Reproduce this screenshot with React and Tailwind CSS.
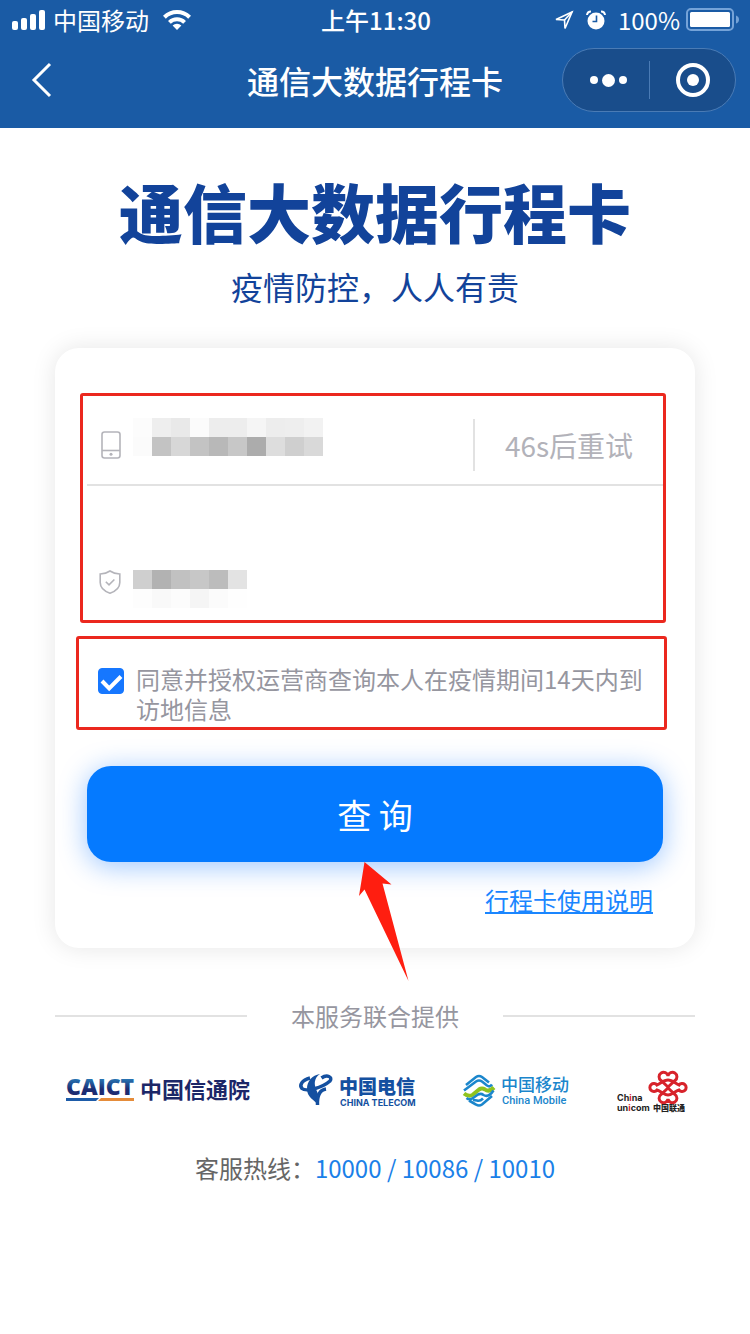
import React from "react";

const phoneMosaic = [
  ["#fcfcfc", "#eeeeee", "#e9e9e9", "#fbfbfb", "#ededed", "#ededed", "#f5f5f5", "#ededed", "#eeeeee", "#f2f2f2"],
  ["#fbfbfb", "#c3c3c3", "#d7d7d7", "#c3c3c3", "#b8b8b8", "#c7c7c7", "#acacac", "#dddddd", "#cfcfcf", "#d9d9d9"],
];

const codeMosaic = [
  ["#cfcfcf", "#b2b2b2", "#c1c1c1", "#c7c7c7", "#bcbcbc", "#e3e3e3"],
  ["#fdfdfd", "#f9f9f9", "#fcfcfc", "#f5f5f5", "#fbfbfb", "#fefefe"],
];

const Mosaic = ({ rows }) => (
  <div aria-hidden="true">
    {rows.map((row, i) => (
      <div key={i} className="flex">
        {row.map((color, j) => (
          <span key={j} className="h-[19px] w-[19px]" style={{ backgroundColor: color }} />
        ))}
      </div>
    ))}
  </div>
);

const StatusBar = () => (
  <div className="grid h-10 grid-cols-3 items-center pr-[10px] pl-3 text-2xl leading-10">
    <div className="flex items-center">
      <svg className="mr-2 h-5 w-[33px]" viewBox="0 0 33 20" fill="currentColor">
        <rect x="0" y="11" width="6" height="9" rx="2" />
        <rect x="9" y="8" width="6" height="12" rx="2" />
        <rect x="18" y="4" width="6" height="16" rx="2" />
        <rect x="27" y="0" width="6" height="20" rx="2" />
      </svg>
      <span>中国移动</span>
      <svg className="ml-[14px] h-5 w-7" viewBox="0 0 28 20" fill="none" stroke="currentColor" strokeWidth="4">
        <path d="M1.4 7.2a18 18 0 0 1 25.2 0" />
        <path d="M6.4 12.4a11 11 0 0 1 15.2 0" />
        <path d="M14 20l-4.4-4.6a6.5 6.5 0 0 1 8.8 0z" fill="currentColor" stroke="none" />
      </svg>
    </div>
    <div className="text-center font-medium">上午11:30</div>
    <div className="flex items-center justify-end">
      <svg className="mr-3 h-5 w-5" viewBox="0 0 20 20" fill="none" stroke="currentColor" strokeWidth="1.6">
        <path d="M18 2L2 9.500l8.500.5.500 8.500z" />
        <path d="M18 2l-7.500 8" />
      </svg>
      <svg className="mr-3 h-5 w-5" viewBox="0 0 20 20">
        <circle cx="10" cy="11" r="8.500" fill="#fff" />
        <path d="M1 5A4 4 0 0 1 5 1.500M19 5a4 4 0 0 0-4-3.500" stroke="#fff" strokeWidth="2" fill="none" />
        <path d="M10.500 5.500v6H6.500" stroke="#1a5ba5" strokeWidth="1.600" fill="none" />
      </svg>
      <span>100%</span>
      <svg className="ml-[6px] h-6 w-[54px]" viewBox="0 0 54 24">
        <rect x="1" y="1" width="46" height="21" rx="4" fill="none" stroke="#75a3d8" strokeWidth="2" />
        <rect x="4" y="4" width="40" height="15" rx="1.500" fill="#fff" />
        <path d="M50 7.500q3 1 3 4t-3 4z" fill="#75a3d8" />
      </svg>
    </div>
  </div>
);

const NavBar = () => (
  <div className="grid h-[88px] grid-cols-[1fr_auto_1fr] items-center px-[14px] pb-2">
    <button type="button" aria-label="返回" className="ml-4 w-6">
      <svg className="h-9 w-6" viewBox="0 0 24 36" fill="none" stroke="currentColor" strokeWidth="3">
        <path d="M20 2L4 18l16 16" />
      </svg>
    </button>
    <h1 className="text-[32px] leading-10 font-medium">通信大数据行程卡</h1>
    <div className="flex h-16 w-[174px] items-center justify-self-end rounded-full border border-[#4a7bb5] bg-[#194d8b]">
      <button type="button" aria-label="更多" className="flex w-[86px] items-center justify-center gap-1 pl-1">
        <span className="h-2 w-2 rounded-full bg-white" />
        <span className="h-[13px] w-[13px] rounded-full bg-white" />
        <span className="h-2 w-2 rounded-full bg-white" />
      </button>
      <span className="h-[38px] w-px bg-[#4a7bb5]" />
      <button type="button" aria-label="关闭" className="flex flex-1 items-center justify-center">
        <svg className="h-[34px] w-[34px]" viewBox="0 0 34 34">
          <circle cx="17" cy="17" r="15" fill="none" stroke="#fff" strokeWidth="4" />
          <circle cx="17" cy="17" r="6" fill="#fff" />
        </svg>
      </button>
    </div>
  </div>
);

const QueryForm = () => (
  <form
    className="mx-[55px] mt-10 rounded-3xl bg-white px-8 pt-[58px] pb-8 shadow-[0_0_24px_rgba(0,0,0,0.1)]"
    onSubmit={(e) => e.preventDefault()}
  >
    <div className="relative">
      <div className="flex h-20 items-center border-b-2 border-[#e2e2e2] pl-[14px]">
        <svg className="h-7 w-5 shrink-0" viewBox="0 0 20 28" fill="none" stroke="#b4b4ba" strokeWidth="1.600">
          <rect x="1" y="1" width="18" height="26" rx="2.500" />
          <path d="M1 19.500h18" />
          <circle cx="10" cy="23.300" r="1.500" fill="#b4b4ba" stroke="none" />
        </svg>
        <div className="relative h-full flex-1">
          <input type="tel" aria-label="手机号" className="h-full w-full pl-3 text-[28px] outline-none" />
          <div className="pointer-events-none absolute top-3 left-3">
            <Mosaic rows={phoneMosaic} />
          </div>
        </div>
        <button
          type="button"
          className="h-[52px] w-[190px] border-l-2 border-[#e2e2e2] text-[28px] text-[#b2b2b9]"
        >
          46s后重试
        </button>
      </div>
      <div className="mt-14 flex h-20 items-center pl-3">
        <svg className="h-6 w-[22px] shrink-0" viewBox="0 0 22 24" fill="none" stroke="#b4b4ba" strokeWidth="1.600">
          <path d="M11 1c2.500 1.800 6 2.800 9.800 3v8.500c0 5-4.300 8.800-9.800 10.700C5.500 21.300 1.200 17.500 1.200 12.500V4C5 3.800 8.500 2.800 11 1z" />
          <path d="M6.800 11.800l3.200 3.100 5.400-5.400" />
        </svg>
        <div className="relative h-full flex-1">
          <input type="text" aria-label="验证码" className="h-full w-full pl-3 text-[28px] outline-none" />
          <div className="pointer-events-none absolute top-7 left-3">
            <Mosaic rows={codeMosaic} />
          </div>
        </div>
      </div>
      <div className="pointer-events-none absolute -top-[13px] -right-[3px] -bottom-px -left-[7px] rounded-[3px] border-3 border-[#eb281e]" />
    </div>

    <div className="relative mt-[42px]">
      <div className="flex items-start gap-3 pl-[11px]">
        <div className="relative mt-1 h-[26px] w-[26px] shrink-0">
          <input
            id="agree"
            type="checkbox"
            defaultChecked
            className="block h-[26px] w-[26px] appearance-none rounded border border-[#1677ff] checked:bg-[#1677ff]"
          />
          <svg
            className="pointer-events-none absolute inset-0 h-[26px] w-[26px]"
            viewBox="0 0 26 26"
            fill="none"
            stroke="#fff"
            strokeWidth="4"
          >
            <path d="M4 13l7.200 7.500L23 8.500" />
          </svg>
        </div>
        <label htmlFor="agree" className="flex-1 text-2xl leading-[30px] text-[#96969f]">
          同意并授权运营商查询本人在疫情期间14天内到访地信息
        </label>
      </div>
      <div className="pointer-events-none absolute -top-7 -right-1 -bottom-[6px] -left-[11px] rounded-[3px] border-3 border-[#eb281e]" />
    </div>

    <div className="relative mt-[42px]">
      <button
        type="submit"
        className="h-24 w-full rounded-3xl bg-[#057aff] text-[34px] text-white shadow-[0_4px_28px_rgba(5,110,255,0.4)]"
      >
        查 询
      </button>
      <svg className="pointer-events-none absolute top-full left-1/2 -ml-4 h-[120px] w-[50px]" viewBox="0 0 50 120">
        <path d="M5.500 0L32.500 22.500l-9 -1L49.500 119L5.500 27.500L0 34z" fill="#ff1e10" />
      </svg>
    </div>

    <div className="mt-[22px] pr-[10px] text-right text-2xl leading-8">
      <a href="#help" className="text-[#1a86ff] underline decoration-2 underline-offset-2">
        行程卡使用说明
      </a>
    </div>
  </form>
);

const CaictLogo = () => (
  <svg className="h-8 w-[186px] overflow-visible" viewBox="0 0 186 32" role="img" aria-label="CAICT 中国信通院">
    <defs>
      <linearGradient id="caict" x1="0" y1="0" x2="0" y2="1">
        <stop offset="0.2" stopColor="#2a87c4" />
        <stop offset="0.600" stopColor="#1c2c72" />
      </linearGradient>
    </defs>
    <text x="0" y="21" fontSize="23" fontWeight="800" fontFamily="Open Sans, sans-serif" fill="url(#caict)">
      CAICT
    </text>
    <path d="M0 24h33l-3 3H0z" fill="#1d5ba8" />
    <path d="M35 24h33v3H32z" fill="#e58c3a" />
    <text x="74" y="24" fontSize="22" fontWeight="700" fill="#1c2768">
      中国信通院
    </text>
  </svg>
);

const TelecomLogo = () => (
  <svg className="h-9 w-[118px] overflow-visible" viewBox="0 0 118 36" role="img" aria-label="中国电信 China Telecom">
    <path d="M21 2C15 6 15 12 17 17c1 3 4 7 2.500 16C15 28 8 25 8 17C8 9 13 3.500 21 2z" fill="#1450a0" />
    <g fill="none" stroke="#1450a0" strokeWidth="3.500">
      <path d="M11 6C3 8 0 13 3 16.500C7 20 23 16 31 9C34 5 28 2 22.500 6" />
      <path d="M27 17C21 18 18 24 18.500 33" />
    </g>
    <text x="40" y="22" fontSize="19" fontWeight="900" fill="#1450a0">
      中国电信
    </text>
    <text x="41" y="34" fontSize="9" fontWeight="700" fontFamily="Inter, sans-serif" fill="#1450a0">
      CHINA TELECOM
    </text>
  </svg>
);

const MobileLogo = () => (
  <svg className="h-9 w-[106px] overflow-visible" viewBox="0 0 106 36" role="img" aria-label="中国移动 China Mobile">
    <g fill="none" strokeWidth="2.600">
      <path d="M3 13L13 5q3-2 6 0l7 5.500" stroke="#1b86cc" />
      <path d="M1 18.500L13 9.500q3-2 6 0l5 4q3 2 5-1" stroke="#1b86cc" />
      <path d="M1 21.500q5 4 9 1l6-5q3-2 6 0 4 3 9-2" stroke="#8fc31f" strokeWidth="4" />
      <path d="M3.500 26q3 2.500 6.500 0l5-3.500q3-1.500 5.500.5 5 3 10-4.500" stroke="#1b86cc" />
      <path d="M6 28.500l7 4q3 2 6 0l10-8.500" stroke="#1b86cc" />
      <path d="M10 28l4 .5q3 1 6-2" stroke="#1b86cc" />
    </g>
    <text x="38" y="19" fontSize="17" fontWeight="500" fill="#1b86cc">
      中国移动
    </text>
    <text x="39" y="32" fontSize="11" fontWeight="500" fontFamily="Roboto, sans-serif" fill="#1b86cc">
      China Mobile
    </text>
  </svg>
);

const UnicomLogo = () => (
  <svg className="h-10 w-[72px] overflow-visible" viewBox="0 0 72 40" role="img" aria-label="China Unicom 中国联通">
    <g fill="none" stroke="#d7232b" strokeWidth="3">
      <path d="M52 10C48 10 45 13 41 15a4 4 0 1 0 0 5C45 21 48 25 52 25" />
      <path d="M52 10C56 10 59 13 63 15a4 4 0 1 1 0 5C59 21 56 25 52 25" />
      <path d="M52 17l-7-6.500a4.500 4.500 0 1 1 7-4.500a4.500 4.500 0 1 1 7 4.500z" />
      <path d="M52 18l-7 6.500a4.500 4.500 0 1 0 7 4.500a4.500 4.500 0 1 0 7-4.500z" />
    </g>
    <g fontWeight="700" fontFamily="Inter, sans-serif" fontSize="9" fill="#222">
      <text x="1" y="31">
        Ch<tspan fill="#d7232b">i</tspan>na
      </text>
      <text x="1" y="41">
        un<tspan fill="#d7232b">i</tspan>com
      </text>
    </g>
    <text x="37" y="41" fontSize="8" fontWeight="900" fill="#222">
      中国联通
    </text>
  </svg>
);

const Providers = () => (
  <footer>
    <div className="mx-[55px] mt-[52px] flex items-center gap-11">
      <span className="h-[2px] flex-1 bg-[#e2e2e2]" />
      <span className="text-2xl leading-8 text-[#96969f]">本服务联合提供</span>
      <span className="h-[2px] flex-1 bg-[#e2e2e2]" />
    </div>
    <div className="mt-9 flex h-11 items-center justify-between pr-[62px] pl-[66px]">
      <CaictLogo />
      <TelecomLogo />
      <MobileLogo />
      <UnicomLogo />
    </div>
    <p className="mt-10 text-center text-2xl leading-8 text-[#666666]">
      客服热线：
      <span className="text-[#1a80e8]">
        <a href="tel:10000">10000</a> / <a href="tel:10086">10086</a> / <a href="tel:10010">10010</a>
      </span>
    </p>
  </footer>
);

const App = () => {
  return (
    <div className="min-h-screen bg-white font-['Noto_Sans_CJK_SC',sans-serif]">
      <header className="bg-[#1a5ba5] text-white">
        <StatusBar />
        <NavBar />
      </header>
      <main>
        <div className="pt-12 text-center text-[#12439a]">
          <h2 className="text-[64px] leading-[68px] font-black">通信大数据行程卡</h2>
          <p className="mt-5 text-[32px] leading-[44px]">疫情防控，人人有责</p>
        </div>
        <QueryForm />
      </main>
      <Providers />
    </div>
  );
};

export default App;
